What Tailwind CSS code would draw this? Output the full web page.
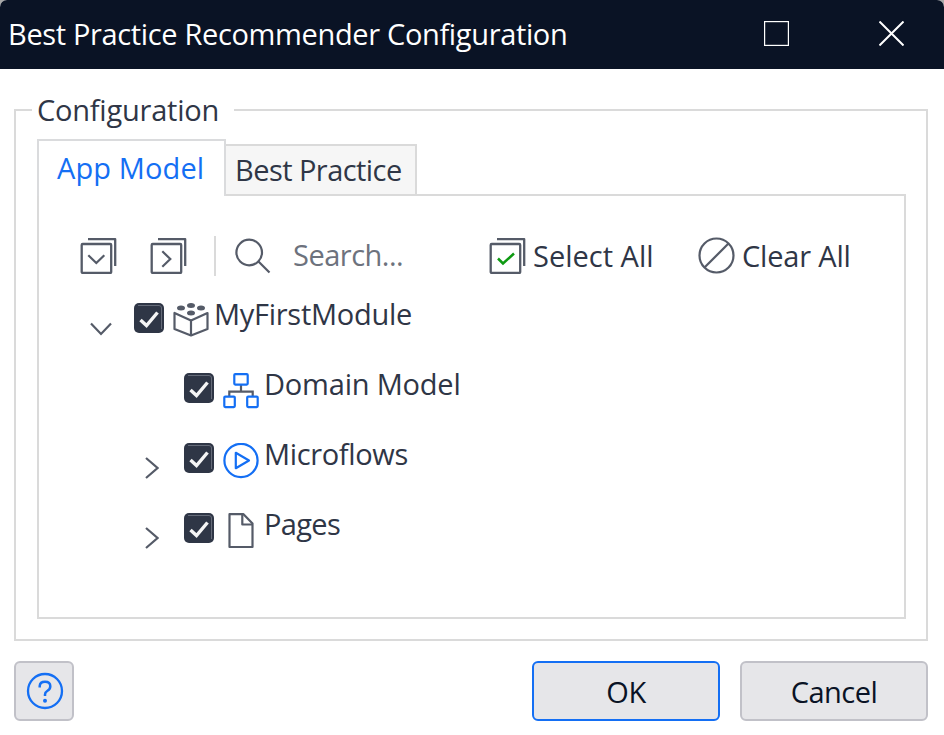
<!DOCTYPE html>
<html lang="en">
<head>
<meta charset="utf-8">
<title>Best Practice Recommender Configuration</title>
<script src="https://cdn.jsdelivr.net/npm/@tailwindcss/browser@4"></script>
</head>
<body class="bg-[#a8a8a8]">
<svg class="hidden">
  <symbol id="check" viewBox="0 0 30 30">
    <rect width="30" height="30" rx="5" fill="#2f3646"/>
    <path d="M4 2.500H25Q27.500 2.500 27.500 5V26" fill="none" stroke="#656b79" stroke-width="1"/>
    <path d="M6.500 17L12.500 22.500L23.500 9.500" fill="none" stroke="#f5f5f5" stroke-width="3.400"/>
  </symbol>
  <symbol id="stack" viewBox="0 0 37 36">
    <g fill="none" stroke="#555b68" stroke-width="2.300">
      <rect x="1.700" y="6" width="29.500" height="29" rx="1"/>
      <path d="M8 1.200H35.200V28" stroke-linejoin="round"/>
    </g>
  </symbol>
  <symbol id="right" viewBox="0 0 14 22">
    <path d="M1 1L12.500 11L1 21" fill="none" stroke="#555b68" stroke-width="2.200"/>
  </symbol>
</svg>
<div class="flex h-[735px] w-[944px] flex-col overflow-hidden rounded-t-[7px] bg-white font-['Open_Sans',sans-serif] text-[29px] leading-[40px] whitespace-nowrap text-[#2f3646]">
  <header class="flex h-[69px] shrink-0 items-center bg-[#0a1325] pl-[8px] text-white">
    <h1 class="-mt-[2px] w-[756px] tracking-[-0.350px]">Best Practice Recommender Configuration</h1>
    <svg class="-mt-[2px] h-[25px] w-[25px]" viewBox="0 0 25 25"><rect x=".6" y=".6" width="23.800" height="23.800" fill="none" stroke="#fff" stroke-width="1.200"/></svg>
    <svg class="-mt-[2px] ml-[90px] h-[25px] w-[25px]" viewBox="0 0 25 25"><path d="M.5 .5L24.500 24.500M24.500 .5L.5 24.500" stroke="#fff" stroke-width="2"/></svg>
  </header>
  <main class="pt-[21px] pr-[16px] pl-[14px]">
    <fieldset class="h-[551px] border-2 border-[#dadada] pr-[20px] pl-[21px]">
      <legend class="-ml-[5px] w-[202px] pl-[5px] tracking-[-0.220px]">Configuration</legend>
      <div class="mt-[9px] flex h-[55px] items-end">
        <div class="relative z-10 -mb-[2px] h-[57px] w-[189px] border-2 border-b-0 border-[#dadbdd] bg-white pt-[7px] pl-[18px] text-[#146ff4]"><span class="tracking-[0.120px]">App Model</span></div>
        <div class="h-[50px] w-[191px] border-t-2 border-r-2 border-[#dadada] bg-[#f6f6f6] pt-[4px] pl-[9px]"><span class="tracking-[-0.550px]">Best Practice</span></div>
      </div>
      <section class="h-[425px] w-[869px] border-2 border-[#dadada]">
        <div class="mt-[40px] flex h-[40px] items-center pl-[41px]">
          <svg class="-mt-[1px] h-[36px] w-[37px]" viewBox="0 0 37 36"><use href="#stack"/><path d="M8.300 17.300L16.300 25L24.300 17.300" fill="none" stroke="#555b68" stroke-width="2.200"/></svg>
          <svg class="-mt-[1px] ml-[33px] h-[36px] w-[37px]" viewBox="0 0 37 36"><use href="#stack"/><path d="M12.300 13.300L20.300 21L12.300 28.700" fill="none" stroke="#555b68" stroke-width="2.200"/></svg>
          <span class="ml-[27px] h-[40px] w-[2px] bg-[#dadada]"></span>
          <svg class="ml-[19px] h-[36px] w-[36px]" viewBox="0 0 36 36" fill="none" stroke="#555b68" stroke-width="2.200"><circle cx="14.200" cy="14.500" r="12.800"/><path d="M23.500 23.500L34.500 34.500"/></svg>
          <span class="-mt-[2px] ml-[22px] w-[196px] tracking-[-0.500px] text-[#6d727d]">Search...</span>
          <svg class="-mt-[1px] h-[36px] w-[37px]" viewBox="0 0 37 36"><use href="#stack"/><path d="M9 20.500L14 25.500L25 15.500" fill="none" stroke="#0e9a12" stroke-width="2.500"/></svg>
          <span class="ml-[7px] w-[165px]">Select All</span>
          <svg class="-mt-[1px] h-[37px] w-[37px]" viewBox="0 0 37 37" fill="none" stroke="#555b68" stroke-width="2.200"><circle cx="18.500" cy="18.500" r="17"/><path d="M6.500 30.500L30.500 6.500"/></svg>
          <span class="ml-[7px] tracking-[-0.180px]">Clear All</span>
        </div>
        <div class="flex flex-col pt-[7px]">
          <div class="flex h-[70px] items-start pl-[51px]">
            <svg class="mt-[39px] h-[14px] w-[22px]" viewBox="0 0 22 14"><path d="M1 1.500L11 12L21 1.500" fill="none" stroke="#555b68" stroke-width="2.200"/></svg>
            <svg class="mt-[20px] ml-[22px] h-[30px] w-[30px]"><use href="#check"/></svg>
            <svg class="mt-[20px] ml-[9px] h-[34px] w-[36px]" viewBox="0 0 36 34">
              <g fill="none" stroke="#555b68" stroke-width="2.200" stroke-linejoin="round"><path d="M1.500 10V26L18 32.500L34.500 26V10L18 17.500Z"/><path d="M18 17.500V32.500"/></g>
              <g fill="#555b68"><ellipse cx="18" cy="2.500" rx="4" ry="2.500"/><ellipse cx="8" cy="5" rx="4" ry="2.500"/><ellipse cx="28" cy="5" rx="4" ry="2.500"/><ellipse cx="18" cy="10" rx="4" ry="2.500"/></g>
            </svg>
            <span class="mt-[11px] ml-[5px] tracking-[-0.280px]">MyFirstModule</span>
          </div>
          <div class="flex h-[70px] items-start pl-[145px]">
            <svg class="mt-[20px] h-[30px] w-[30px]"><use href="#check"/></svg>
            <svg class="mt-[20px] ml-[9px] h-[36px] w-[36px]" viewBox="0 0 36 36" fill="none" stroke-width="2.200">
              <path d="M18 11V18.500M6.300 23V18.600H29.700V23" stroke="#555b68"/>
              <g stroke="#146ff4"><rect x="11.300" y="1.100" width="13.400" height="10.500" rx="1"/><rect x="1.300" y="23.600" width="10.500" height="10.500" rx="1"/><rect x="24.200" y="23.600" width="10.500" height="10.500" rx="1"/></g>
            </svg>
            <span class="mt-[11px] ml-[5px] tracking-[-0.200px]">Domain Model</span>
          </div>
          <div class="flex h-[70px] items-start pl-[106px]">
            <svg class="mt-[34px] h-[22px] w-[14px]"><use href="#right"/></svg>
            <svg class="mt-[20px] ml-[25px] h-[30px] w-[30px]"><use href="#check"/></svg>
            <svg class="mt-[20px] ml-[9px] h-[36px] w-[36px]" viewBox="0 0 36 36" fill="none" stroke="#146ff4" stroke-width="2.200"><circle cx="18" cy="17.500" r="16.600"/><path d="M12.800 9.800V25.200L26 17.500Z" stroke-linejoin="round"/></svg>
            <span class="mt-[11px] ml-[5px] tracking-[-0.350px]">Microflows</span>
          </div>
          <div class="flex h-[70px] items-start pl-[106px]">
            <svg class="mt-[34px] h-[22px] w-[14px]"><use href="#right"/></svg>
            <svg class="mt-[20px] ml-[25px] h-[30px] w-[30px]"><use href="#check"/></svg>
            <svg class="mt-[20px] ml-[9px] h-[36px] w-[36px]" viewBox="0 0 36 36" fill="none" stroke="#555b68" stroke-width="2.200" stroke-linejoin="round"><path d="M6.500 1.200H20.500L29.500 10.500V34H6.500Z"/><path d="M19.300 1.500V11.500H29.500"/></svg>
            <span class="mt-[11px] ml-[5px] tracking-[-0.650px]">Pages</span>
          </div>
        </div>
      </section>
    </fieldset>
    <footer class="mt-[20px] flex h-[60px] text-[#0a1325]">
      <button class="flex h-[60px] w-[60px] items-center justify-center rounded-[6px] border-2 border-[#c1c1c8] bg-[#e6e6e9]">
        <svg class="-mt-[1px] ml-[1px] h-[38px] w-[38px]" viewBox="0 0 38 38" fill="none" stroke="#146ff4"><circle cx="19" cy="19" r="17" stroke-width="2.300"/><path d="M13.700 15.500V14Q14 9.700 19 9.700Q24.300 9.700 24.300 14.200Q24.300 17 21.500 18.700Q19 20.200 19 22.500V24" stroke-width="2.500"/><circle cx="19" cy="28.700" r="2" fill="#146ff4" stroke="none"/></svg>
      </button>
      <button class="ml-auto h-[60px] w-[188px] rounded-[6px] border-2 border-[#146ff4] bg-[#e6e6e9] pt-[1px] tracking-[-0.500px]"><span>OK</span></button>
      <button class="ml-[20px] h-[60px] w-[188px] rounded-[6px] border-2 border-[#c1c1c8] bg-[#e6e6e9] pt-[1px] tracking-[-0.500px]"><span>Cancel</span></button>
    </footer>
  </main>
</div>
</body>
</html>
